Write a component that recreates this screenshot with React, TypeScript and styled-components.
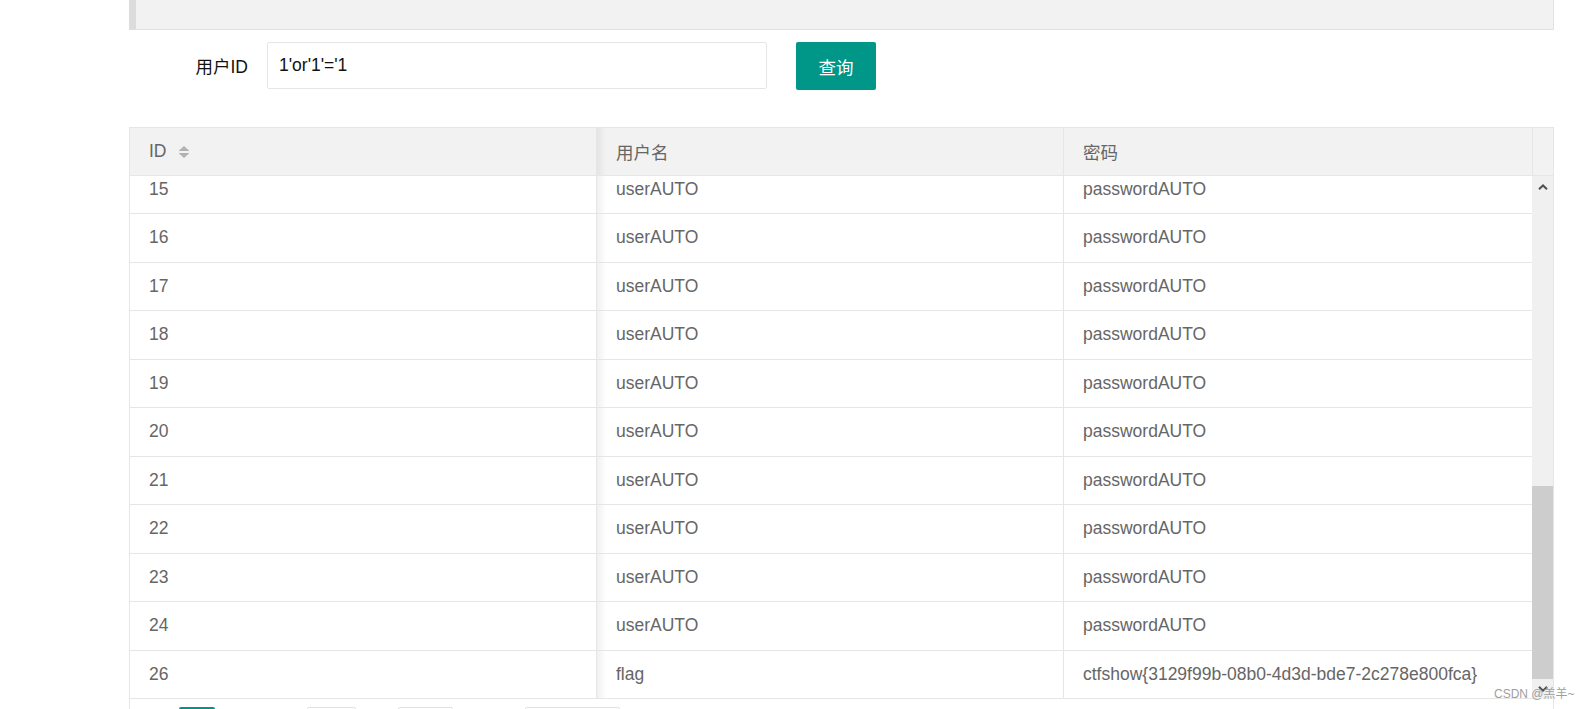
import React from "react";
import styled, { createGlobalStyle } from "styled-components";

const Global = createGlobalStyle`
  html, body {
    margin: 0;
    padding: 0;
    background: #fff;
    overflow: hidden;
    height: 709px;
  }
  body {
    font-family: "Liberation Sans", Arial, "Noto Sans CJK SC", sans-serif;
    font-size: 17.5px;
    color: #666;
  }
`;

const Page = styled.div`
  position: relative;
  width: 1591px;
  height: 709px;
  overflow: hidden;
`;

const Main = styled.div`
  width: 1425px;
  margin-left: 129px;
  display: flex;
  flex-direction: column;
`;

const Quote = styled.div`
  height: 29px;
  box-sizing: content-box;
  background: #f2f2f2;
  border-left: 7px solid #dcdcdc;
  border-right: 1px solid #e2e2e2;
  border-bottom: 1px solid #e2e2e2;
`;

const FormRow = styled.div`
  display: flex;
  align-items: flex-start;
  margin-top: 12px;
  height: 48px;
`;

const Label = styled.label`
  width: 119px;
  height: 47px;
  display: flex;
  align-items: center;
  justify-content: flex-end;
  color: #111;
  font-size: 17.5px;
`;

const Input = styled.input`
  box-sizing: border-box;
  margin-left: 19px;
  width: 500px;
  height: 47px;
  border: 1px solid #e6e6e6;
  border-radius: 2px;
  padding: 0 11px;
  font-family: "Liberation Sans", Arial, sans-serif;
  font-size: 17.5px;
  color: #111;
  outline: none;
  background: #fff;
`;

const Button = styled.button`
  margin-left: 29px;
  width: 80px;
  height: 48px;
  border: none;
  border-radius: 2px;
  background: #009688;
  color: #fff;
  font-family: "Liberation Sans", Arial, "Noto Sans CJK SC", sans-serif;
  font-size: 17.5px;
  cursor: pointer;
`;

const Table = styled.div`
  margin-top: 37px;
  border: 1px solid #e6e6e6;
  border-bottom: none;
  background: #fff;
  display: flex;
  flex-direction: column;
`;

const COLS = "467px 467px 468px 21px";

const HeadRow = styled.div`
  display: grid;
  grid-template-columns: ${COLS};
  height: 48px;
  box-sizing: border-box;
  border-bottom: 1px solid #e6e6e6;
  background: #f2f2f2;
`;

const Cell = styled.div<{ $sep?: boolean; $shade?: boolean }>`
  display: flex;
  align-items: center;
  gap: 11px;
  padding: 0 19px;
  box-sizing: border-box;
  white-space: nowrap;
  overflow: hidden;
  color: #666;
  border-right: ${(p) => (p.$sep ? "1px solid #e6e6e6" : "none")};
  background-image: ${(p) =>
    p.$shade
      ? "linear-gradient(to right, rgba(0,0,0,0.06), rgba(0,0,0,0) 9px)"
      : "none"};
`;

const Gutter = styled.div`
  border-left: 1px solid #e6e6e6;
  background: #f2f2f2;
`;

const Body = styled.div`
  display: grid;
  grid-template-columns: 1402px 21px;
  height: 523px;
`;

const Viewport = styled.div`
  display: flex;
  flex-direction: column;
  justify-content: flex-end;
  overflow: hidden;
  height: 523px;
`;

const Row = styled.div`
  flex-shrink: 0;
  display: grid;
  grid-template-columns: 467px 467px 468px;
  height: 48.5px;
  box-sizing: border-box;
  border-bottom: 1px solid #e6e6e6;
`;

const Scrollbar = styled.div`
  display: flex;
  flex-direction: column;
  background: #f0f0f0;
  height: 523px;
`;

const Arrow = styled.div<{ $h: number }>`
  height: ${(p) => p.$h}px;
  display: flex;
  align-items: center;
  justify-content: center;
  flex-shrink: 0;
`;

const Track = styled.div`
  flex: 1;
  display: flex;
  flex-direction: column;
  justify-content: flex-end;
`;

const Thumb = styled.div`
  height: 193px;
  background: #cdcdcd;
`;

const PageBar = styled.div`
  display: flex;
  align-items: flex-start;
  padding: 8px 0 0 18px;
  height: 40px;
  color: #666;
  font-size: 14px;
`;

const PageText = styled.span<{ $w: number }>`
  width: ${(p) => p.$w}px;
  height: 32px;
  line-height: 32px;
  text-align: center;
`;

const PageCurr = styled.span`
  width: 36px;
  height: 32px;
  line-height: 32px;
  text-align: center;
  background: #009688;
  color: #fff;
  border-radius: 2px;
`;

const PageBox = styled.span<{ $w: number }>`
  box-sizing: border-box;
  width: ${(p) => p.$w}px;
  height: 32px;
  line-height: 30px;
  border: 1px solid #e2e2e2;
  border-radius: 2px;
  text-align: center;
`;

const Watermark = styled.div`
  position: absolute;
  left: 1494px;
  top: 684px;
  font-family: "Liberation Sans", Arial, "Noto Sans CJK SC", sans-serif;
  font-size: 12px;
  color: #a0a0a0;
  white-space: nowrap;
`;

const SortIcon = () => (
  <svg width="12" height="12" viewBox="0 0 12 12">
    <polygon points="6,0 11.5,5 0.5,5" fill="#b2b2b2" />
    <polygon points="0.5,7 11.5,7 6,12" fill="#b2b2b2" />
  </svg>
);

const Chevron = ({ up }: { up: boolean }) => (
  <svg width="10" height="6" viewBox="0 0 10 6">
    <polyline
      points={up ? "1,5.2 5,1.4 9,5.2" : "1,0.8 5,4.6 9,0.8"}
      fill="none"
      stroke="#505050"
      strokeWidth="2"
    />
  </svg>
);

type Rec = { id: number; user: string; pass: string };

// Rows in view at the bottom of the scrolled body (rows 1–14 are scrolled out).
const rows: Rec[] = [
  ...Array.from({ length: 10 }, (_, i) => ({
    id: i + 15,
    user: "userAUTO",
    pass: "passwordAUTO",
  })),
  { id: 26, user: "flag", pass: "ctfshow{3129f99b-08b0-4d3d-bde7-2c278e800fca}" },
];

export default function App() {
  return (
    <Page>
      <Global />
      <Main>
        <Quote />
        <FormRow>
          <Label>用户ID</Label>
          <Input defaultValue="1'or'1'='1" />
          <Button>查询</Button>
        </FormRow>
        <Table>
          <HeadRow>
            <Cell $sep>
              ID <SortIcon />
            </Cell>
            <Cell $sep $shade>用户名</Cell>
            <Cell>密码</Cell>
            <Gutter />
          </HeadRow>
          <Body>
            <Viewport>
              {rows.map((r) => (
                <Row key={r.id}>
                  <Cell $sep>{r.id}</Cell>
                  <Cell $sep $shade>{r.user}</Cell>
                  <Cell>{r.pass}</Cell>
                </Row>
              ))}
            </Viewport>
            <Scrollbar>
              <Arrow $h={21}>
                <Chevron up />
              </Arrow>
              <Track>
                <Thumb />
              </Track>
              <Arrow $h={20}>
                <Chevron up={false} />
              </Arrow>
            </Scrollbar>
          </Body>
          <PageBar>
            <PageText $w={31}>‹</PageText>
            <PageCurr>1</PageCurr>
            <PageText $w={31}>›</PageText>
            <PageText $w={61}>到第</PageText>
            <PageBox $w={49}>1</PageBox>
            <PageText $w={42}>页</PageText>
            <PageBox $w={55}>确定</PageBox>
            <PageText $w={72}>共 25 条</PageText>
            <PageBox $w={95}>1000 条/页</PageBox>
          </PageBar>
        </Table>
      </Main>
      <Watermark>CSDN @羔羊~</Watermark>
    </Page>
  );
}
